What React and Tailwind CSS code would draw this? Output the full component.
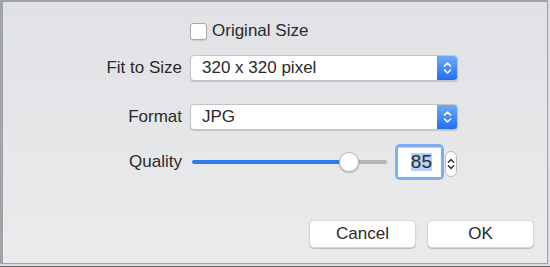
import React from 'react';

const Chevrons = ({ color = 'white', w = 9, h = 16 }) => (
  <svg width={w} height={h} viewBox="0 0 9 16" fill="none">
    <path d="M1.5 6 L4.5 3 L7.5 6" stroke={color} strokeWidth="1.6" strokeLinecap="round" strokeLinejoin="round" />
    <path d="M1.5 10 L4.5 13 L7.5 10" stroke={color} strokeWidth="1.6" strokeLinecap="round" strokeLinejoin="round" />
  </svg>
);

const Select = ({ value }) => (
  <div className="flex h-[26px] w-[268px] items-stretch rounded-[4px] border border-[#c4c4c6] bg-white shadow-[0_1px_1px_rgba(0,0,0,0.15)] overflow-hidden">
    <span className="flex-1 pl-[11px] leading-[24px]">{value}</span>
    <span className="flex w-[20px] items-center justify-center bg-gradient-to-b from-[#6eaaf9] to-[#1b6ef3]">
      <Chevrons />
    </span>
  </div>
);

const Button = ({ children }) => (
  <button className="h-[28px] w-[107px] rounded-[5px] border border-[#d6d6d6] bg-white text-[17px] text-[#2a2a2a] shadow-[0_1px_1px_rgba(0,0,0,0.2)]">
    {children}
  </button>
);

export default function App() {
  return (
    <div
      className="w-[550px] h-[267px] bg-[#dcdde0] border-b border-[#6a6c70]"
      style={{ fontFamily: '"Liberation Sans", Arial, sans-serif' }}
    >
      <div className="flex h-[264px] w-[548px] flex-col border-t-2 border-l-[3px] border-r border-b border-[#a0a4a8] bg-gradient-to-b from-[#e1e2e6] to-[#ebebec] text-[17px] text-[#2a2a2a]">
        {/* checkbox row */}
        <div className="mt-[20px] flex h-[18px] items-center pl-[187px]">
          <span className="h-[17px] w-[17px] rounded-[3px] border border-[#a9a9a9] bg-white shadow-[0_1px_1px_rgba(0,0,0,0.1)]" />
          <span className="ml-[5px]">Original Size</span>
        </div>

        {/* form rows */}
        <div className="mt-[15px] grid grid-cols-[179px_auto] items-center gap-x-[8px]">
          <span className="text-right">Fit to Size</span>
          <Select value="320 x 320 pixel" />

          <span className="mt-[23px] text-right">Format</span>
          <div className="mt-[23px]"><Select value="JPG" /></div>

          <span className="mt-[14px] text-right">Quality</span>
          <div className="mt-[14px] flex h-[36px] items-center">
            <div className="relative ml-[2px] h-[20px] w-[195px]">
              <div className="absolute left-0 top-[8px] h-[4px] w-[157px] rounded-l-full bg-[#2f7cf0]" />
              <div className="absolute right-0 top-[8px] h-[4px] w-[40px] rounded-r-full bg-[#b4b4b6]" />
              <div className="absolute left-[147px] top-0 h-[20px] w-[20px] rounded-full border border-[#b9b9b9] bg-white shadow-[0_1px_2px_rgba(0,0,0,0.25)]" />
            </div>
            <div className="ml-[8px] flex h-[36px] w-[49px] items-center justify-center rounded-[5px] bg-[#7fadf2] p-[3px]">
              <div className="flex h-full w-full items-center justify-end bg-white pr-[9px] shadow-[inset_0_1px_1px_rgba(0,0,0,0.2)]">
                <span className="bg-[#b3d1fb] leading-[18px] text-[19px]">85</span>
              </div>
            </div>
            <div className="ml-[1px] mt-[4px] flex h-[26px] w-[12px] items-center justify-center rounded-[6px] border border-[#bdbdbd] bg-white">
              <Chevrons color="#333" w={8} h={16} />
            </div>
          </div>
        </div>

        {/* buttons */}
        <div className="mt-auto mb-[15px] flex justify-end gap-[11px] pr-[13px]">
          <Button>Cancel</Button>
          <Button>OK</Button>
        </div>
      </div>
    </div>
  );
}
